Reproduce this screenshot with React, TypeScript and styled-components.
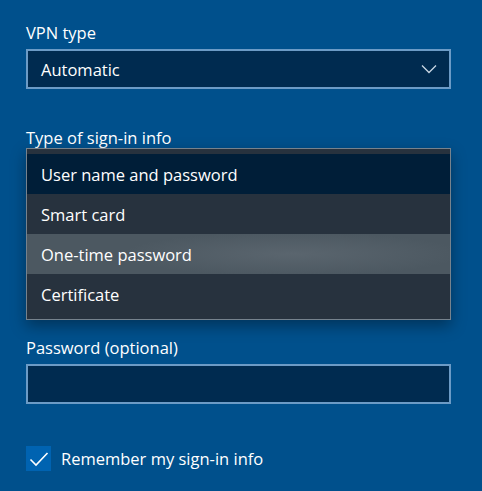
import React from "react";
import styled, { createGlobalStyle } from "styled-components";

const GlobalStyle = createGlobalStyle`
  html, body {
    margin: 0;
    padding: 0;
    background: #00508c;
  }
  body {
    font-family: "Open Sans", "Noto Sans", sans-serif;
    color: #ffffff;
  }
`;

const Page = styled.div`
  width: 482px;
  height: 491px;
  overflow: hidden;
  box-sizing: border-box;
  padding: 22px 31px 0 26px;
  display: flex;
  flex-direction: column;
  gap: 38px;
`;

const Field = styled.div`
  position: relative;
  display: flex;
  flex-direction: column;
  gap: 5px;
`;

const Label = styled.div`
  font-size: 16.5px;
  line-height: 22px;
  height: 22px;
  color: #ffffff;
`;

const Box = styled.div`
  box-sizing: border-box;
  height: 40px;
  border: 2px solid #6c9bc6;
  background: #002b50;
  display: flex;
  align-items: center;
  justify-content: space-between;
  padding: 0 12px 0 13px;
  font-size: 16.5px;
  color: #ffffff;
`;

const Popup = styled.ul`
  position: absolute;
  top: 21px;
  left: 0;
  right: 0;
  margin: 0;
  padding: 5px 0;
  list-style: none;
  border: 1px solid #76828d;
  background: #27323e;
  box-shadow: 0 6px 14px rgba(0, 0, 0, 0.35);
  z-index: 2;
`;

const Option = styled.li<{ $state?: "selected" | "hover" }>`
  height: 40px;
  display: flex;
  align-items: center;
  padding-left: 14px;
  font-size: 16.5px;
  color: #ffffff;
  background: ${(p) =>
    p.$state === "selected"
      ? "#001e38"
      : p.$state === "hover"
      ? "radial-gradient(ellipse 170px 22px at 265px 50%, #5a656e 0%, #4c5861 100%)"
      : "transparent"};
`;

const CheckRow = styled.label`
  display: flex;
  align-items: center;
  gap: 10px;
  margin-top: 4px;
  font-size: 16.5px;
`;

const CheckBox = styled.span`
  width: 25px;
  height: 25px;
  background: #0063b1;
  display: flex;
  align-items: center;
  justify-content: center;
`;

const Chevron = () => (
  <svg width="16" height="10" viewBox="0 0 16 10">
    <polyline points="1,1.5 8,8.5 15,1.5" fill="none" stroke="#c8d6e4" strokeWidth="1.3" />
  </svg>
);

const Check = () => (
  <svg width="20" height="16" viewBox="0 0 20 16">
    <polyline points="1.5,8.5 7,14 18.5,2" fill="none" stroke="#ffffff" strokeWidth="1.6" />
  </svg>
);

const options = ["User name and password", "Smart card", "One-time password", "Certificate"];

const App: React.FC = () => (
  <>
    <GlobalStyle />
    <Page>
      <Field>
        <Label>VPN type</Label>
        <Box>
          Automatic
          <Chevron />
        </Box>
      </Field>
      <Field>
        <Label>Type of sign-in info</Label>
        <Box aria-label="User name and password" />
        <Popup>
          {options.map((o, i) => (
            <Option key={o} $state={i === 0 ? "selected" : i === 2 ? "hover" : undefined}>
              {o}
            </Option>
          ))}
        </Popup>
      </Field>
      {/* user name field sits under the open popup */}
      <Field>
        <Label aria-label="User name (optional)" />
        <Box />
      </Field>
      <Field>
        <Label>Password (optional)</Label>
        <Box />
      </Field>
      <CheckRow>
        <CheckBox>
          <Check />
        </CheckBox>
        Remember my sign-in info
      </CheckRow>
    </Page>
  </>
);

export default App;
